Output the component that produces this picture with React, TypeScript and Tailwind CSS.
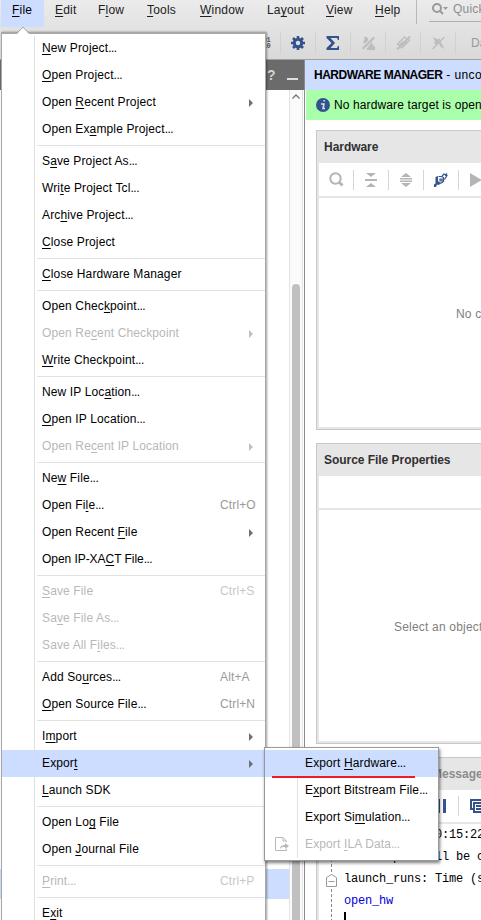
import type { ReactNode } from 'react';

type Item = { t: string; tight?: boolean; off?: boolean; sub?: boolean; key?: string; on?: boolean };

// An underscore marks the mnemonic letter that follows it.
const groups: Item[][] = [
  [{ t: '_New Project...' }, { t: '_Open Project...' }, { t: 'Open _Recent Project', sub: true }, { t: 'Open Ex_ample Project...' }],
  [{ t: 'S_ave Project As...' }, { t: 'Wri_te Project Tcl...' }, { t: 'Arc_hive Project...' }, { t: '_Close Project' }],
  [{ t: '_Close Hardware Manager' }],
  [{ t: 'Open Chec_kpoint...' }, { t: 'Open Re_cent Checkpoint', off: true, sub: true }, { t: '_Write Checkpoint...' }],
  [{ t: 'New IP Loc_ation...' }, { t: '_Open IP Location...' }, { t: 'Open Re_cent IP Location', off: true, sub: true }],
  [{ t: 'Ne_w File...' }, { t: 'Open Fi_le...', key: 'Ctrl+O' }, { t: 'Open Recent _File', sub: true }, { t: 'Open IP-XA_CT File...', tight: true }],
  [{ t: '_Save File', off: true, key: 'Ctrl+S' }, { t: 'Sa_ve File As...', off: true }, { t: 'Save All F_iles...', off: true }],
  [{ t: 'Add So_urces...', key: 'Alt+A' }, { t: '_Open Source File...', key: 'Ctrl+N' }],
  [{ t: 'I_mport', sub: true }, { t: 'Expor_t', sub: true, on: true }, { t: '_Launch SDK' }],
  [{ t: 'Open Lo_g File' }, { t: 'Open _Journal File' }],
  [{ t: '_Print...', off: true, key: 'Ctrl+P' }],
  [{ t: 'E_xit' }],
];

const exports: Item[] = [
  { t: 'Export _Hardware...', on: true },
  { t: 'E_xport Bitstream File...' },
  { t: 'Export Si_mulation...' },
  { t: 'Export _ILA Data...', off: true },
];

function Mnemonic({ t }: { t: string }) {
  const i = t.indexOf('_');
  const dots = t.endsWith('...');
  return (
    <span className="whitespace-pre">
      {t.slice(0, i)}
      <span className="underline decoration-1 underline-offset-[2px] [text-decoration-skip-ink:none]">{t[i + 1]}</span>
      {dots ? t.slice(i + 2, -3) : t.slice(i + 2)}
      {dots && <span className="tracking-[-0.5px]">...</span>}
    </span>
  );
}

function Row({ it }: { it: Item }) {
  return (
    <div className={`flex h-[27px] items-center pl-10 text-[12px] ${it.tight ? 'tracking-[-0.05px]' : 'tracking-[0.13px]'} ${it.on ? 'relative bg-[#ccddff]' : ''} ${it.off ? 'text-[#b8b8b8]' : 'text-black'}`}>
      <span className="w-[178px] shrink-0"><Mnemonic t={it.t} /></span>
      {it.key && <span className={it.off ? 'text-[#c8c8c8]' : 'text-[#9c9a94]'}>{it.key}</span>}
      {it.sub && <span className={`ml-[29px] mt-px h-0 w-0 border-y-4 border-l-4 border-y-transparent ${it.off ? 'border-l-[#c0c0c0]' : 'border-l-[#707070]'}`} />}
    </div>
  );
}

function Tool({ children }: { children: ReactNode }) {
  return <div className="flex h-[22px] w-[35px] shrink-0 items-center justify-center border-r border-[#d2d2d2]">{children}</div>;
}

function PanelTool({ children }: { children: ReactNode }) {
  return <div className="flex h-5 w-[35px] shrink-0 items-center justify-center border-r border-[#d6d6d6]">{children}</div>;
}

function Panel({ title, children, className }: { title: string; children: ReactNode; className: string }) {
  return (
    <section className={`flex w-[200px] shrink-0 flex-col border border-[#c8c8c8] ${className}`}>
      <div className="flex min-h-0 flex-1 flex-col border-2 border-t-0 border-[#e6e6e6]">
        <h2 className="flex h-8 shrink-0 items-center bg-[#e6e6e6] pl-[5px] text-[12px] font-bold tracking-[-0.04px] text-[#303030]">{title}</h2>
        {children}
      </div>
    </section>
  );
}

export default function App() {
  return (
    <div className="relative h-[920px] w-[481px] overflow-hidden bg-white font-['Liberation_Sans',Arial,sans-serif] text-[12px] leading-[15px] text-black">
      <header className="h-[60px] border-b border-[#a0a0a0] bg-linear-to-b from-[#ebebeb] to-[#d9d9d9]">
        <nav className="flex h-[27px] pl-px tracking-[0.2px] text-[#202020] *:shrink-0">
          <span className="w-[43px] bg-[#ccddff] pl-[11px] pt-[3px] text-black"><Mnemonic t="_File" /></span>
          <span className="w-[43px] pl-[11px] pt-[3px]"><Mnemonic t="_Edit" /></span>
          <span className="w-[49px] pl-[11px] pt-[3px]"><Mnemonic t="F_low" /></span>
          <span className="w-[53px] pl-[11px] pt-[3px]"><Mnemonic t="_Tools" /></span>
          <span className="w-[67px] pl-[11px] pt-[3px]"><Mnemonic t="_Window" /></span>
          <span className="w-[59px] pl-[11px] pt-[3px]"><Mnemonic t="La_yout" /></span>
          <span className="w-[49px] pl-[11px] pt-[3px]"><Mnemonic t="_View" /></span>
          <span className="w-[52px] pl-[11px] pt-[3px]"><Mnemonic t="_Help" /></span>
          <span className="h-6 w-px bg-[#b8b8b8]" />
          <span className="ml-[12px] flex h-[22px] w-[60px] border-b border-[#b0b0b0] pl-[2px] text-[#8c8c8c]">
            <svg className="mt-[2px] shrink-0" width="18" height="14" viewBox="0 0 18 14" fill="none" stroke="#999" strokeWidth="2"><circle cx="6" cy="6" r="4" /><path d="M9 9l3 3" /><path d="M12 5h5l-2.500 3z" fill="#999" stroke="none" /></svg>
            <span className="ml-[4px] mt-[2px]">Quick</span>
          </span>
        </nav>
        <div className="flex h-8 items-center pl-[246px]">
          <Tool><span className="pl-[3px] font-['Liberation_Mono',monospace] text-[7px] font-bold leading-[6px] text-[#555]">101<br />010</span></Tool>
          <Tool>
            <svg width="14" height="14" viewBox="0 0 14 14" fill="none" stroke="#34528c"><circle cx="7" cy="7" r="3.700" strokeWidth="3" /><path d="M7 0v2.500M7 11.500V14M0 7h2.500M11.500 7H14M2 2l2 2M10 10l2 2M12 2l-2 2M4 10l-2 2" strokeWidth="2.600" /></svg>
          </Tool>
          <Tool>
            <svg width="14" height="14" viewBox="0 0 14 14" fill="#34528c"><path d="M.5 0h12.500v4h-1l-1-2H4.500L9 7l-4.500 5H11l1-2h1v4H.5v-2L5.500 7 .5 2z" /></svg>
          </Tool>
          <Tool>
            <svg width="15" height="14" viewBox="0 0 15 14" fill="#bdbdbd"><path d="M1 12L12.500.5 14 2 2.500 13.500zM5 14h9v-3l-3-3V5.500zM3 1h3l1.500 3-3.500 3.500L2 6l1.500-2z" /></svg>
          </Tool>
          <Tool>
            <svg width="15" height="14" viewBox="0 0 15 14" fill="none" stroke="#bdbdbd" strokeWidth="1.300"><path d="M1 8.500L8.500 1l2 2M5.500 12.500l8-8-1.500-1.500M3 9.500l4-4M6 10l5-5M2 8l4 4" /><path d="M1 13.500L14 .5" strokeWidth="2" /></svg>
          </Tool>
          <Tool>
            <svg width="15" height="14" viewBox="0 0 15 14" fill="#bdbdbd"><path d="M1 12.500L13 .5l1 1L2 13.500zM2 1l5 2.500L9.500 2 8 6l-2.500 2.500L3 7.500l1-2zM8 8l2-2 1.500 3.500 2 3.500L10 11z" /></svg>
          </Tool>
          <span className="ml-[15px] shrink-0 text-[#999]">Da</span>
        </div>
      </header>

      <main className="flex h-[860px]">
        <aside className="flex w-[304px] shrink-0 flex-col">
          <div className="flex h-[30px] shrink-0 items-start bg-[#6b6b6b] pl-[267px] text-[#d4d4d4]">
            <b className="mt-2 text-[14px]">?</b>
            <span className="ml-[11px] mt-[18px] h-[2px] w-[11px] bg-[#dedede]" />
          </div>
          <div className="flex min-h-0 flex-1">
            <div className="w-[289px] pt-[779px]"><div className="h-[30px] bg-[#ccddff]" /></div>
            <div className="flex w-[14px] flex-col items-center border-x border-[#e2e2e2] bg-[#fafafa] pt-[4px]">
              <svg width="8" height="5" viewBox="0 0 8 5" fill="none" stroke="#777" strokeWidth="1.300"><path d="M.5 4.500L4 1l3.500 3.500" /></svg>
              <div className="mt-[185px] w-2 flex-1 rounded-t bg-[#c0c0c0]" />
            </div>
          </div>
        </aside>

        <div className="flex w-[177px] shrink-0 flex-col overflow-hidden border-l border-[#8c8c8c]">
          <div className="flex h-[30px] shrink-0 items-center whitespace-nowrap bg-[#ccddff] pl-[9px]"><b className="tracking-[-0.48px]">HARDWARE MANAGER</b><span className="ml-1 tracking-[0.4px]">- unconnected</span></div>
          <div className="ml-px flex h-[30px] shrink-0 items-center whitespace-nowrap bg-[#aaffaa] pl-[10px]">
            <svg className="shrink-0" width="14" height="14" viewBox="0 0 14 14"><circle cx="7" cy="7" r="7" fill="#34528c" /><path d="M7.400 2.800h1.500M5 6h3l-1 4.500h2" fill="none" stroke="#d5e6ee" strokeWidth="1.500" /></svg>
            <span className="ml-1 tracking-[0.12px]">No hardware target is open.</span>
          </div>
          <Panel title="Hardware" className="ml-[11px] mt-[10px] h-[300px]">
            <div className="flex h-[35px] shrink-0 items-center border-b-2 border-[#e6e6e6]">
              <PanelTool><svg width="15" height="15" viewBox="0 0 15 15" fill="none" stroke="#b5b5b5" strokeWidth="2"><circle cx="6.500" cy="6.500" r="5.200" /><path d="M10.500 10.500l3 3" strokeWidth="3" /></svg></PanelTool>
              <PanelTool><svg width="12" height="14" viewBox="0 0 12 14" fill="#b5b5b5"><path d="M1 0h10L6 4zM0 6h12v2H0zM1 14h10L6 10z" /></svg></PanelTool>
              <PanelTool><svg width="12" height="14" viewBox="0 0 12 14" fill="#b5b5b5"><path d="M1 4h10L6 0zM0 5h12v1.500H0zM0 7.500h12V9H0zM1 10h10l-5 4z" /></svg></PanelTool>
              <PanelTool><svg width="14" height="14" viewBox="0 0 14 14" fill="none" stroke="#34528c" strokeWidth="1.200"><path d="M4.500 3.500h3l2 1v4l-2 1.500h-2M8 3l2-2 3 1.500-2.500 4M11 2.500l2-2M6 6h2v2H6z" /><path d="M1.500 4L4 3v5l3 2.500L4.500 12 3 11.500l-1 2.500H0v-2.500l1.500-1z" fill="#34528c" stroke="none" /></svg></PanelTool>
              <svg className="ml-[11px] shrink-0" width="12" height="14" viewBox="0 0 12 14" fill="#b5b5b5"><path d="M0 0l12 7-12 7z" /></svg>
            </div>
            <div className="flex flex-1 items-center pl-[137px] pt-[4px] text-[#808080]"><span className="whitespace-nowrap tracking-[0.17px]">No content</span></div>
          </Panel>
          <Panel title="Source File Properties" className="ml-[11px] mt-[13px] h-[301px]">
            <div className="h-[34px] shrink-0 border-b-2 border-[#e6e6e6]" />
            <div className="flex flex-1 items-center pl-[75px] pt-[4px] text-[#808080]"><span className="whitespace-nowrap tracking-[0.2px]">Select an object to see properties</span></div>
          </Panel>
          <section className="ml-[11px] mt-[13px] min-h-0 w-[200px] flex-1 border-l border-t border-[#c8c8c8]">
            <div className="flex h-full flex-col border-l-2 border-[#e6e6e6] *:shrink-0">
              <div className="flex h-8 items-center bg-[#e6e6e6] pl-[113px] font-bold text-[#8c8c8c]">Messages</div>
              <div className="flex h-[34px] items-center border-b-2 border-[#e6e6e6] pl-[118px] *:shrink-0">
                <span className="mr-[3px] h-[14px] w-[3px] bg-[#34528c]" /><span className="h-[14px] w-[3px] bg-[#34528c]" />
                <span className="ml-3 mr-[11px] h-5 w-px bg-[#d6d6d6]" />
                <svg width="16" height="14" viewBox="0 0 16 14" fill="none" stroke="#34528c" strokeWidth="2"><path d="M11 1H1v9h2M4 4h11v9H4zM6 7h8M6 10h8" /></svg>
              </div>
              <div className="flex font-['Liberation_Mono',monospace] text-[12px] leading-[22px]">
                <div className="ml-[12px] flex h-[98px] w-4 shrink-0 items-start border-l border-dashed border-[#888] pt-[50px]">
                  <svg className="-ml-[6px] shrink-0" width="11" height="13" viewBox="0 0 11 13" fill="#fff" stroke="#999"><path d="M.5 3.500l5-3 5 3v9H.5zM2.500 7.500h6" /></svg>
                </div>
                <div className="-ml-[3px] whitespace-pre tracking-[-0.2px]">
                  <div>[Wed Mar 13 10:15:22</div><div>Run output will be captured</div><div>launch_runs: Time (s)</div><div className="text-[#0000e0]">open_hw</div><div className="h-3 w-[2px] bg-black" />
                </div>
              </div>
            </div>
          </section>
        </div>
      </main>

      <div className="absolute left-px top-[32px] w-[265px] border border-t-2 border-[#a8a8a8] bg-white pt-px shadow-[1px_0_2px_#00000060]">
        <div className="absolute bottom-0 left-8 top-[2px] w-px bg-[#e0e0e0]" />
        <svg className="absolute left-[14px] top-[-8px]" width="14" height="9" viewBox="0 0 14 9"><path d="M1 8l6-6 6 6v1H1z" fill="#fff" stroke="none" /><path d="M1 7l6-6 6 6" fill="none" stroke="#aaa" /></svg>
        {groups.map((g, i) => (
          <div key={i} className={i ? "before:my-[2px] before:ml-[35px] before:block before:h-px before:bg-[#e2e2e2] before:content-['']" : ''}>
            {g.map((it) => <Row key={it.t} it={it} />)}
          </div>
        ))}
      </div>

      <div className="absolute left-[264px] top-[747px] w-[175px] border border-[#999] bg-white pb-[2px] pt-[2px] shadow-[1px_2px_3px_#00000080]">
        <div className="absolute bottom-[2px] left-8 top-[2px] w-px bg-[#e2e2e2]" />
        {exports.map((it) => <Row key={it.t} it={it} />)}
        <span className="absolute left-[7px] top-[28px] h-[2px] w-[143px] bg-[#ed1c24]" />
        <svg className="absolute bottom-[9px] left-[10px]" width="14" height="14" viewBox="0 0 14 14" fill="none" stroke="#b8b8b8"><path d="M11.500 5V4L8 .5H.5v13h11V12M8 1v3h3" /><path d="M5 12c0-3 2-4 5-4V6l4 3-4 3v-2c-2 0-4 0-5 2z" fill="#b8b8b8" stroke="none" /></svg>
      </div>
    </div>
  );
}
